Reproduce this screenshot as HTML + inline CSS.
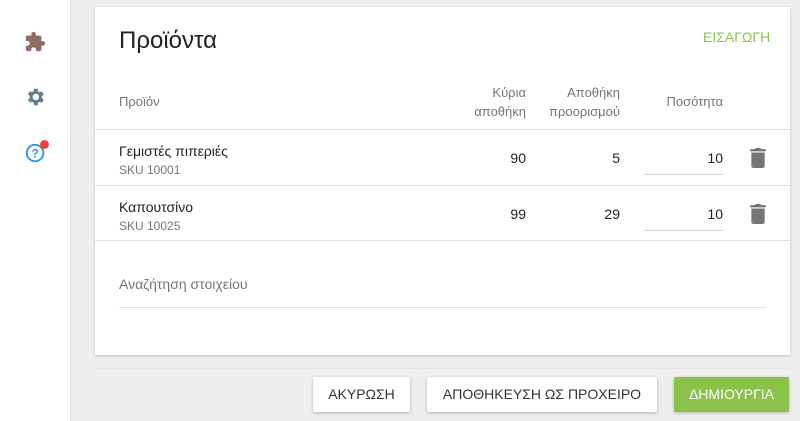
<!DOCTYPE html><html><head><style>
*{box-sizing:border-box;margin:0;padding:0}
body{width:800px;height:421px;overflow:hidden;background:#eeeeee;font-family:"Liberation Sans",sans-serif;position:relative;color:#212121}
.side{position:absolute;left:0;top:0;width:71px;height:421px;background:#fff;border-right:1px solid #e0e0e0}
.card{position:absolute;left:95px;top:7px;width:695px;height:348px;background:#fff;box-shadow:0 1px 3px rgba(0,0,0,.2)}
.abs{position:absolute}
.h{font-size:13px;color:#757575}
.row{position:absolute;left:0;width:695px;height:56px;border-top:1px solid #e0e0e0}
.nm{position:absolute;left:24px;top:13px;font-size:14px;color:#212121}
.sku{position:absolute;left:24px;top:33px;font-size:12px;color:#757575}
.num{position:absolute;font-size:14px;text-align:right;top:20px}
.inp{position:absolute;left:549px;top:44px;width:79px;border-bottom:1px solid #d6d6d6}
.btn{position:absolute;top:377px;height:35px;background:#fff;box-shadow:0 1px 3px rgba(0,0,0,.25);font-size:14px;color:#333;text-align:center;line-height:35px;border-radius:2px}
</style></head><body>
<div class="side">
<svg class="abs" style="left:24px;top:31px" width="22" height="22" viewBox="0 0 24 24"><path fill="#8d6e63" d="M20.5 11H19V7a2 2 0 0 0-2-2h-4V3.5a2.5 2.5 0 0 0-5 0V5H4a2 2 0 0 0-2 2v3.8h1.5a2.7 2.7 0 0 1 0 5.4H2V20a2 2 0 0 0 2 2h3.8v-1.5a2.7 2.7 0 0 1 5.4 0V22H17a2 2 0 0 0 2-2v-4h1.5a2.5 2.5 0 0 0 0-5z"/></svg>
<svg class="abs" style="left:24px;top:86px" width="22" height="22" viewBox="0 0 24 24"><path fill="#607d8b" d="M19.4 13a7.5 7.5 0 0 0 0-2l2.1-1.6-2-3.5-2.5 1a7 7 0 0 0-1.7-1L14.9 3h-4l-.4 2.7a7 7 0 0 0-1.7 1l-2.5-1-2 3.5L6.5 11a7.5 7.5 0 0 0 0 2l-2.2 1.6 2 3.5 2.5-1a7 7 0 0 0 1.7 1l.4 2.9h4l.4-2.7a7 7 0 0 0 1.7-1l2.5 1 2-3.5zM12.9 15.5a3.5 3.5 0 1 1 0-7 3.5 3.5 0 0 1 0 7z"/></svg>
<svg class="abs" style="left:25px;top:142px" width="22" height="22" viewBox="0 0 24 24"><circle cx="11" cy="12" r="9" fill="none" stroke="#2196f3" stroke-width="2"/><text x="11" y="17" font-size="13" font-weight="bold" fill="#2196f3" text-anchor="middle" font-family="Liberation Sans">?</text></svg>
<div class="abs" style="left:40px;top:140px;width:9px;height:9px;border-radius:50%;background:#f44336"></div>
</div>
<div class="card">
<div class="abs" style="left:24px;top:20px;font-size:24px;color:#212121">Προϊόντα</div>
<div class="abs" style="left:608px;top:22px;font-size:14px;color:#8bc34a">ΕΙΣΑΓΩΓΗ</div>
<div class="abs h" style="left:24px;top:87px">Προϊόν</div>
<div class="abs h" style="left:360px;top:76px;width:71px;text-align:right;line-height:19px">Κύρια<br>αποθήκη</div>
<div class="abs h" style="left:430px;top:76px;width:95px;text-align:right;line-height:19px">Αποθήκη<br>προορισμού</div>
<div class="abs h" style="left:540px;top:87px;width:88px;text-align:right">Ποσότητα</div>
<div class="row" style="top:122px"><div class="nm">Γεμιστές πιπεριές</div><div class="sku">SKU 10001</div>
<div class="num" style="left:360px;width:71px">90</div><div class="num" style="left:430px;width:95px">5</div><div class="num" style="left:549px;width:79px">10</div><div class="inp"></div>
<svg class="abs" style="left:654px;top:18px" width="18" height="20" viewBox="0 0 14 18"><path fill="#757575" d="M1 4h12v12a2 2 0 0 1-2 2H3a2 2 0 0 1-2-2zM0 1h4l1-1h4l1 1h4v2H0z"/></svg></div>
<div class="row" style="top:178px"><div class="nm">Καπουτσίνο</div><div class="sku">SKU 10025</div>
<div class="num" style="left:360px;width:71px">99</div><div class="num" style="left:430px;width:95px">29</div><div class="num" style="left:549px;width:79px">10</div><div class="inp"></div>
<svg class="abs" style="left:654px;top:18px" width="18" height="20" viewBox="0 0 14 18"><path fill="#757575" d="M1 4h12v12a2 2 0 0 1-2 2H3a2 2 0 0 1-2-2zM0 1h4l1-1h4l1 1h4v2H0z"/></svg></div>
<div class="row" style="top:233px;height:1px"></div>
<div class="abs" style="left:24px;top:269px;font-size:14px;color:#757575">Αναζήτηση στοιχείου</div>
<div class="abs" style="left:24px;top:300px;width:647px;border-bottom:1px solid #e0e0e0"></div>
</div>
<div class="abs" style="left:95px;top:368px;width:695px;border-top:1px solid #e4e4e4"></div>
<div class="btn" style="left:313px;width:97px">ΑΚΥΡΩΣΗ</div>
<div class="btn" style="left:427px;width:230px">ΑΠΟΘΗΚΕΥΣΗ ΩΣ ΠΡΟΧΕΙΡΟ</div>
<div class="btn" style="left:674px;width:115px;background:#8bc34a;color:#fff">ΔΗΜΙΟΥΡΓΙΑ</div>
</body></html>
